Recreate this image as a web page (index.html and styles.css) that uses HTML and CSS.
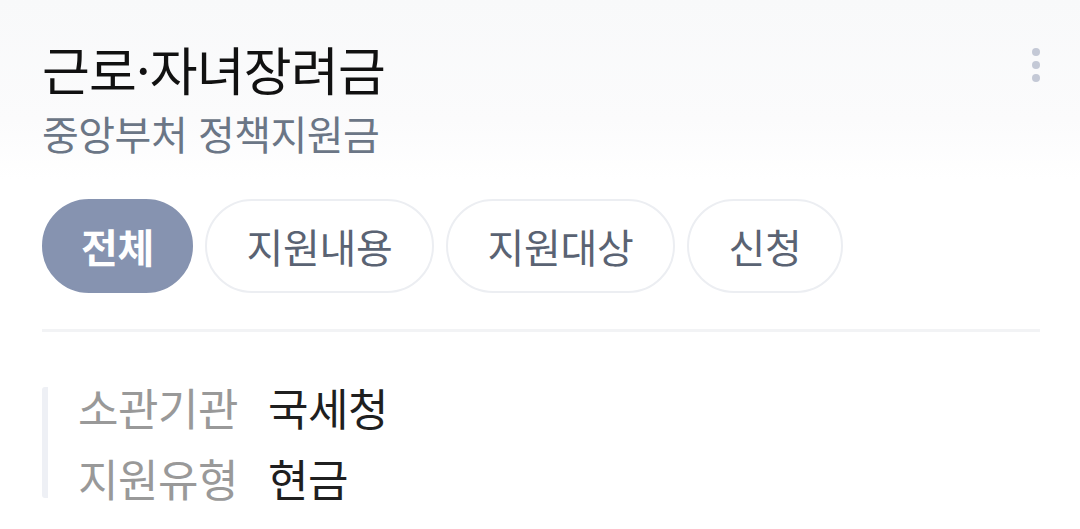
FILE: index.html
```html
<!DOCTYPE html>
<html lang="ko">
<head>
<meta charset="utf-8">
<link rel="stylesheet" href="styles.css">
</head>
<body>
<div class="page">
  <header class="head">
    <div class="titles">
      <h1 class="title">근로·자녀장려금</h1>
      <p class="subtitle">중앙부처 정책지원금</p>
    </div>
    <button class="kebab" aria-label="더보기">
      <span class="dot"></span><span class="dot"></span><span class="dot"></span>
    </button>
  </header>
  <nav class="tabs">
    <span class="tab active">전체</span>
    <span class="tab">지원내용</span>
    <span class="tab">지원대상</span>
    <span class="tab">신청</span>
  </nav>
  <hr class="divider">
  <section class="info">
    <div class="row"><span class="label">소관기관</span><span class="value">국세청</span></div>
    <div class="row"><span class="label">지원유형</span><span class="value">현금</span></div>
  </section>
</div>
</body>
</html>
```
FILE: styles.css
```css
* { box-sizing: border-box; }
html, body { margin: 0; padding: 0; }
body {
  background: #ffffff;
  font-family: "Noto Sans CJK KR", "Noto Sans", sans-serif;
  width: 1080px;
  height: 529px;
  overflow: hidden;
}
.page {
  background: linear-gradient(#f8f9fa 0px, #fbfbfc 120px, #ffffff 180px);
  height: 529px;
  padding: 0 40px 0 42px;
}
.head {
  display: flex;
  justify-content: space-between;
  align-items: flex-start;
  padding-top: 33px;
}
.title {
  margin: 0;
  font-size: 52px;
  font-weight: 400;
  line-height: 72px;
  color: #111111;
  letter-spacing: -0.8px;
}
.subtitle {
  margin: 0;
  font-size: 40px;
  line-height: 56px;
  color: #6b7686;
  letter-spacing: -0.5px;
}
.kebab {
  border: 0;
  background: none;
  padding: 0;
  margin-top: 15px;
  display: flex;
  flex-direction: column;
  gap: 5px;
}
.dot {
  width: 8px;
  height: 8px;
  border-radius: 50%;
  background: #c4c9d6;
}
.tabs {
  display: flex;
  gap: 12px;
  margin-top: 38px;
}
.tab {
  height: 94px;
  padding: 0 39.5px;
  border: 2px solid #eceef2;
  border-radius: 47px;
  background: #ffffff;
  font-size: 40px;
  color: #5a6373;
  display: flex;
  align-items: center;
  letter-spacing: -0.3px;
}
.tab.active {
  background: #8693b0;
  border-color: #8693b0;
  color: #ffffff;
  font-weight: 700;
  padding: 0 37px;
}
.divider {
  border: 0;
  height: 3px;
  background: #f2f3f5;
  margin: 36px 0 0 0;
}
.info {
  margin-top: 55px;
  border-left: 6px solid #eef0f5;
  border-radius: 3px;
  padding-left: 30px;
  display: flex;
  flex-direction: column;
  gap: 31px;
}
.row {
  display: flex;
  gap: 30px;
  font-size: 44px;
  line-height: 40px;
  letter-spacing: -0.5px;
}
.label { color: #999999; }
.value { color: #1f1f1f; }
```
